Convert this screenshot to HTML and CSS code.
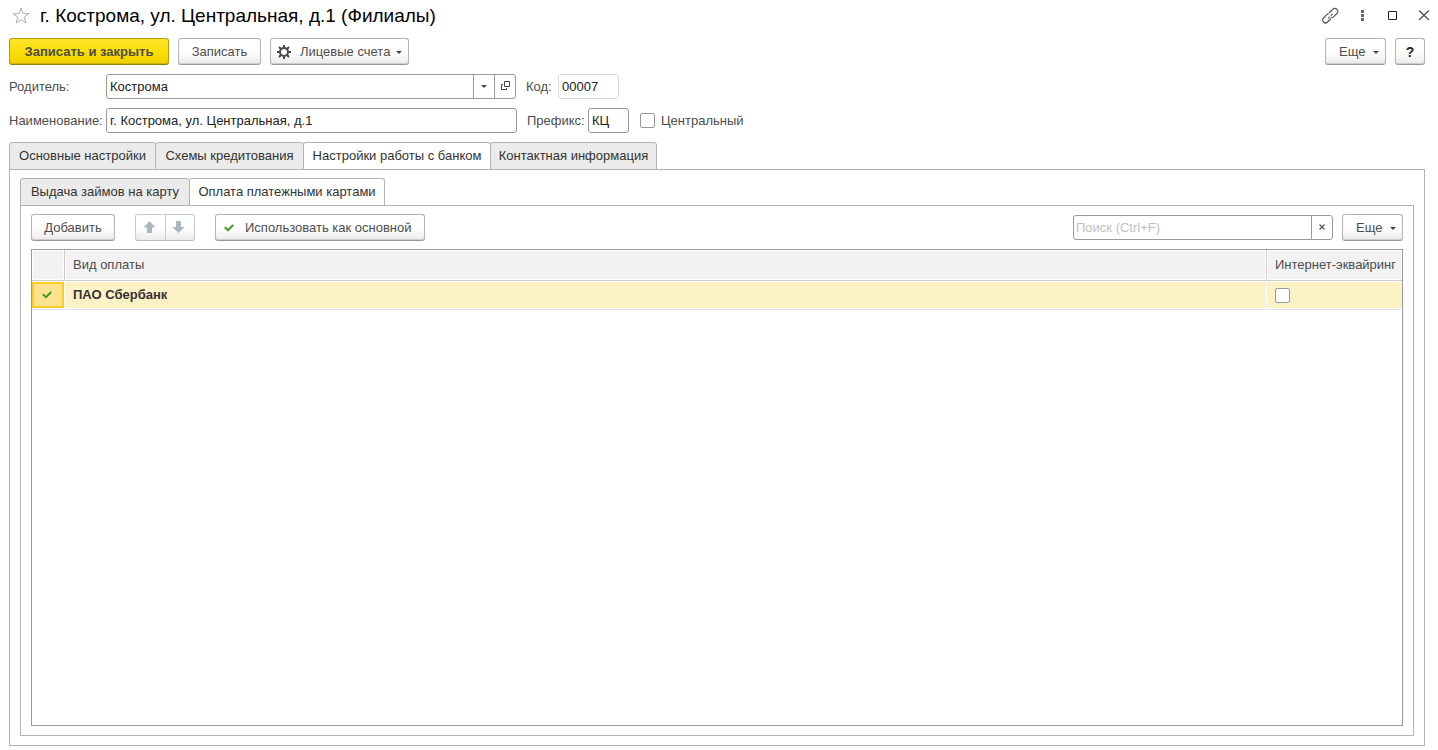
FILE: index.html
```html
<!DOCTYPE html>
<html lang="ru">
<head>
<meta charset="utf-8">
<meta name="viewport" content="width=device-width, initial-scale=1">
<title>г. Кострома, ул. Центральная, д.1 (Филиалы)</title>
<link rel="stylesheet" href="styles.css">
</head>
<body>
<header class="titlebar">
  <button class="icon-btn" type="button" aria-label="В избранное">
    <svg width="18" height="18" viewBox="0 0 18 18" fill="none" stroke="#a9adb3"><path d="M9 1l2 5.700h6L12.200 10.200l1.800 5.900L9 12.600l-5 3.500 1.800-5.900L1 6.700h6z"/></svg>
  </button>
  <h1 class="title">г. Кострома, ул. Центральная, д.1 (Филиалы)</h1>
  <div class="window-tools">
    <button class="icon-btn" type="button" aria-label="Получить ссылку">
      <svg width="18" height="18" viewBox="0 0 18 18" fill="none" stroke="#555" stroke-width="1.200"><path d="M7 6l3.700-3.700a2.800 2.800 0 0 1 4.200 0 2.800 2.800 0 0 1 0 4.200l-3.400 3.400M9 11.500l-3.500 3.500a2.800 2.800 0 0 1-4-4l3.200-3.400a3 3 0 0 1 2-.8M6.200 11.300l1.600-1.600M8.800 8.700l1.900-1.900M11.500 9.900q-1.200.7-2.300.4"/></svg>
    </button>
    <button class="icon-btn" type="button" aria-label="Меню">
      <svg width="18" height="18" viewBox="0 0 18 18" fill="#666"><path d="M8 3h3v3H8zM8 7h3v3H8zM8 11h3v3H8z"/></svg>
    </button>
    <button class="icon-btn" type="button" aria-label="Развернуть">
      <svg width="18" height="18" viewBox="0 0 18 18" fill="none" stroke="#222"><path d="M4.500 4.500h8v8h-8z"/></svg>
    </button>
    <button class="icon-btn" type="button" aria-label="Закрыть">
      <svg width="18" height="18" viewBox="0 0 18 18" fill="none" stroke="#444" stroke-width="1.100"><path d="M4 3.500l10 9.500M14 3.500L4 13"/></svg>
    </button>
  </div>
</header>

<div class="toolbar commands">
  <button class="btn btn-primary" type="button">Записать и закрыть</button>
  <button class="btn btn-save" type="button">Записать</button>
  <button class="btn btn-accounts" type="button">
    <svg width="14" height="14" viewBox="0 0 14 14" fill="none" stroke="#4a4a4a" stroke-width="2"><circle cx="7" cy="7" r="4"/><path d="M7 0v3M7 11v3M0 7h3M11 7h3M2 2l2 2M10 10l2 2M12 2l-2 2M4 10l-2 2"/></svg>
    Лицевые счета<span class="caret"></span>
  </button>
  <span class="spacer"></span>
  <button class="btn btn-more" type="button">Еще<span class="caret"></span></button>
  <button class="btn btn-help" type="button" aria-label="Справка">?</button>
</div>

<form class="fields">
  <div class="field-row">
    <label class="label-main" for="parent">Родитель:</label>
    <div class="combo combo-parent">
      <input id="parent" type="text" value="Кострома">
      <button class="combo-btn" type="button" aria-label="Выбрать"><span class="caret"></span></button>
      <button class="combo-btn" type="button" aria-label="Открыть">
        <svg width="11" height="11" viewBox="0 0 11 11" fill="none" stroke="#444"><path d="M4.500.5h5v5h-5zM3 3.500H1.500v5h5V7"/></svg>
      </button>
    </div>
    <label class="label-code" for="code">Код:</label>
    <input class="text-box code" id="code" type="text" value="00007" readonly>
  </div>
  <div class="field-row">
    <label class="label-main" for="name">Наименование:</label>
    <input class="text-box name" id="name" type="text" value="г. Кострома, ул. Центральная, д.1">
    <label class="label-prefix" for="prefix">Префикс:</label>
    <input class="text-box prefix" id="prefix" type="text" value="КЦ">
    <input class="check check-central" id="central" type="checkbox">
    <label for="central">Центральный</label>
  </div>
</form>

<nav class="tabs" role="tablist">
  <button class="tab tab-general" type="button" role="tab">Основные настройки</button>
  <button class="tab tab-credit" type="button" role="tab">Схемы кредитования</button>
  <button class="tab tab-bank tab-active" type="button" role="tab" aria-selected="true">Настройки работы с банком</button>
  <button class="tab tab-contact" type="button" role="tab">Контактная информация</button>
</nav>
<main class="panel">
  <div class="tabs" role="tablist">
    <button class="tab tab-issue" type="button" role="tab">Выдача займов на карту</button>
    <button class="tab tab-payment tab-active" type="button" role="tab" aria-selected="true">Оплата платежными картами</button>
  </div>
  <section class="panel">
    <div class="toolbar">
      <button class="btn btn-add" type="button">Добавить</button>
      <div class="btn-group">
        <button class="btn" type="button" aria-label="Переместить вверх" disabled><svg width="13" height="13" viewBox="0 0 13 13" fill="#a9b7bf"><path d="M6.500 0l6 6.500H9V12H4V6.500H.5z"/></svg></button>
        <button class="btn" type="button" aria-label="Переместить вниз" disabled><svg width="13" height="13" viewBox="0 0 13 13" fill="#a9b7bf"><path d="M6.500 12l6-6H9V0H4v6H.5z"/></svg></button>
      </div>
      <button class="btn btn-default" type="button">
        <svg width="10" height="8" viewBox="0 0 10 8" fill="none" stroke="#3f9b1b" stroke-width="2"><path d="M.8 3.200l3.200 3L9.200 1"/></svg>
        Использовать как основной
      </button>
      <span class="spacer"></span>
      <div class="combo search">
        <input type="text" placeholder="Поиск (Ctrl+F)" aria-label="Поиск">
        <button class="combo-btn" type="button" aria-label="Очистить"><svg width="7" height="7" viewBox="0 0 7 7" fill="none" stroke="#555" stroke-width="1.200"><path d="M.5.5l5 5M5.500.5l-5 5"/></svg></button>
      </div>
      <button class="btn btn-more" type="button">Еще<span class="caret"></span></button>
    </div>
    <div class="grid">
      <table>
        <colgroup><col class="col-mark"><col><col class="col-net"></colgroup>
        <thead><tr><th aria-label="Основной"></th><th>Вид оплаты</th><th>Интернет-эквайринг</th></tr></thead>
        <tbody>
          <tr>
            <td class="current"><svg width="10" height="8" viewBox="0 0 10 8" fill="none" stroke="#3f9b1b" stroke-width="2"><path d="M.8 3.200l3.200 3L9.200 1"/></svg></td>
            <td>ПАО Сбербанк</td>
            <td><input class="check" type="checkbox" aria-label="Интернет-эквайринг"></td>
          </tr>
        </tbody>
      </table>
    </div>
  </section>
</main>
</body>
</html>
```
FILE: styles.css
```css
* { box-sizing: border-box; }

body {
  display: flex;
  flex-direction: column;
  min-height: 100vh;
  margin: 0;
  padding: 0 13px 4px 9px;
  background: #fff;
  color: #4d4d4d;
  font: 13px/16px "Liberation Sans", Arial, sans-serif;
}

button, input { font: inherit; color: inherit; margin: 0; }
svg { display: block; flex: none; }

.titlebar { display: flex; align-items: center; height: 32px; }
.title { margin: 0 0 0 10px; font-size: 19px; line-height: 24px; font-weight: 400; color: #000; }
.icon-btn { width: 18px; height: 18px; padding: 0; border: 0; background: none; }
.titlebar > .icon-btn { margin-left: 3px; }
.window-tools { display: flex; gap: 13px; margin: 0 -8px 0 auto; }

.toolbar { display: flex; align-items: center; height: 27px; }
.commands { margin-top: 6px; gap: 9px; }
.spacer { flex: 1; }

.btn {
  display: flex;
  align-items: center;
  justify-content: center;
  height: 27px;
  padding: 0 12px;
  border: 1px solid #b3b3b3;
  border-bottom-color: #999;
  border-radius: 3px;
  background: linear-gradient(#fff 50%, #ebebeb);
  box-shadow: inset 0 -1px #ccc;
  white-space: nowrap;
}
.btn-primary {
  width: 160px;
  border-color: #b89e00 #b89e00 #947f00;
  background: linear-gradient(#ffe62e, #fbdc00 60%, #efcf00);
  box-shadow: inset 0 -1px #cdb200;
  font-weight: 700;
}
.btn-save { width: 83px; }
.btn-accounts { width: 139px; padding: 0 6px; justify-content: flex-start; }
.btn-accounts svg { margin-right: 9px; }
.btn-more { width: 61px; padding: 0 6px 0 13px; }
.btn-help { width: 30px; padding: 0; font-size: 14px; font-weight: 700; color: #222; }
.btn-add { width: 84px; margin-right: 20px; }
.btn-default { width: 210px; padding: 0 8px; justify-content: flex-start; }
.btn-default svg { margin-right: 11px; }

.caret {
  width: 6px;
  border: 3px solid transparent;
  border-top-color: #444;
  border-bottom: 0;
}
.btn .caret { margin: 2px 0 0 auto; }

.btn-group { display: flex; margin-right: 20px; }
.btn-group .btn { width: 30px; padding: 0 3px 0 0; border-color: #ccc #ccc #bbb; box-shadow: none; }
.btn-group .btn:first-child { width: 31px; border-radius: 3px 0 0 3px; }
.btn-group .btn:last-child { margin-left: -1px; border-radius: 0 3px 3px 0; }

.fields { display: grid; gap: 9px; margin: 9px 0; }
.field-row { display: flex; align-items: center; }
.label-main { width: 97px; }
.label-code { width: 32px; margin-left: 10px; }
.label-prefix { width: 61px; margin-left: 10px; }

.text-box, .combo {
  height: 25px;
  border: 1px solid #999;
  border-radius: 3px;
  background: #fff;
  color: #222;
}
.text-box { padding: 0 3px; }
.name { width: 411px; }
.code { width: 61px; border-color: #d9d9d9; }
.prefix { width: 41px; }
.combo { display: flex; }
.combo input { flex: 1; min-width: 0; padding: 0 3px; border: 0; background: none; }
.combo-parent { width: 410px; }
.combo-btn {
  display: flex;
  align-items: center;
  justify-content: center;
  width: 21px;
  padding: 0;
  border: 0;
  border-left: 1px solid #999;
  background: none;
}
.search { width: 260px; margin-right: 9px; }
.search input { padding: 0 2px; }
.search input::placeholder { color: #bfbfbf; }

.check {
  appearance: none;
  display: block;
  width: 15px;
  height: 15px;
  border: 1px solid #999;
  border-radius: 2px;
  background: #fff;
}
.check-central { margin: 0 6px 0 11px; }

.tabs { display: flex; margin-bottom: -1px; }
.tab {
  height: 28px;
  padding: 0;
  border: 1px solid #b3b3b3;
  border-radius: 3px 3px 0 0;
  background: #ebebeb;
  color: #333;
  white-space: nowrap;
}
.tab + .tab { margin-left: -1px; }
.tab-general { width: 147px; }
.tab-credit { width: 149px; }
.tab-bank { width: 188px; }
.tab-contact { width: 167px; }
.tab-issue { width: 170px; }
.tab-payment { width: 196px; }
.tab-active { background: #fff; border-bottom-color: #fff; }

.panel {
  display: flex;
  flex: 1;
  flex-direction: column;
  padding: 8px 10px 9px;
  border: 1px solid #b3b3b3;
}

.grid { flex: 1; margin-top: 8px; border: 1px solid #999; }
table { width: 100%; table-layout: fixed; border-collapse: separate; border-spacing: 0; }
.col-mark { width: 33px; }
.col-net { width: 135px; }
th, td { text-align: left; white-space: nowrap; }
th {
  height: 31px;
  padding: 0 8px;
  border-right: 1px solid #ccc;
  border-bottom: 1px solid #ccc;
  background: #f2f2f2;
  box-shadow: inset 0 0 0 1px #fff;
  font-weight: 400;
}
th:last-child { padding-right: 0; }
td {
  height: 29px;
  padding: 0 8px;
  border-right: 1px solid #fff;
  border-bottom: 1px solid #e5e5e5;
  background: #fdf1c6;
  box-shadow: inset 0 1px #fff, inset 0 -1px #fff;
  color: #333;
  font-weight: 700;
}
th:last-child, td:last-child { border-right: 0; }
td.current {
  background: #ffe48f;
  box-shadow: inset 0 1px #fff, inset 0 -1px #fff, inset 0 3px #fc2, inset 0 -3px #fc2, inset 2px 0 #fc2, inset -2px 0 #fc2;
}
td.current svg { margin-left: 2px; }
```
